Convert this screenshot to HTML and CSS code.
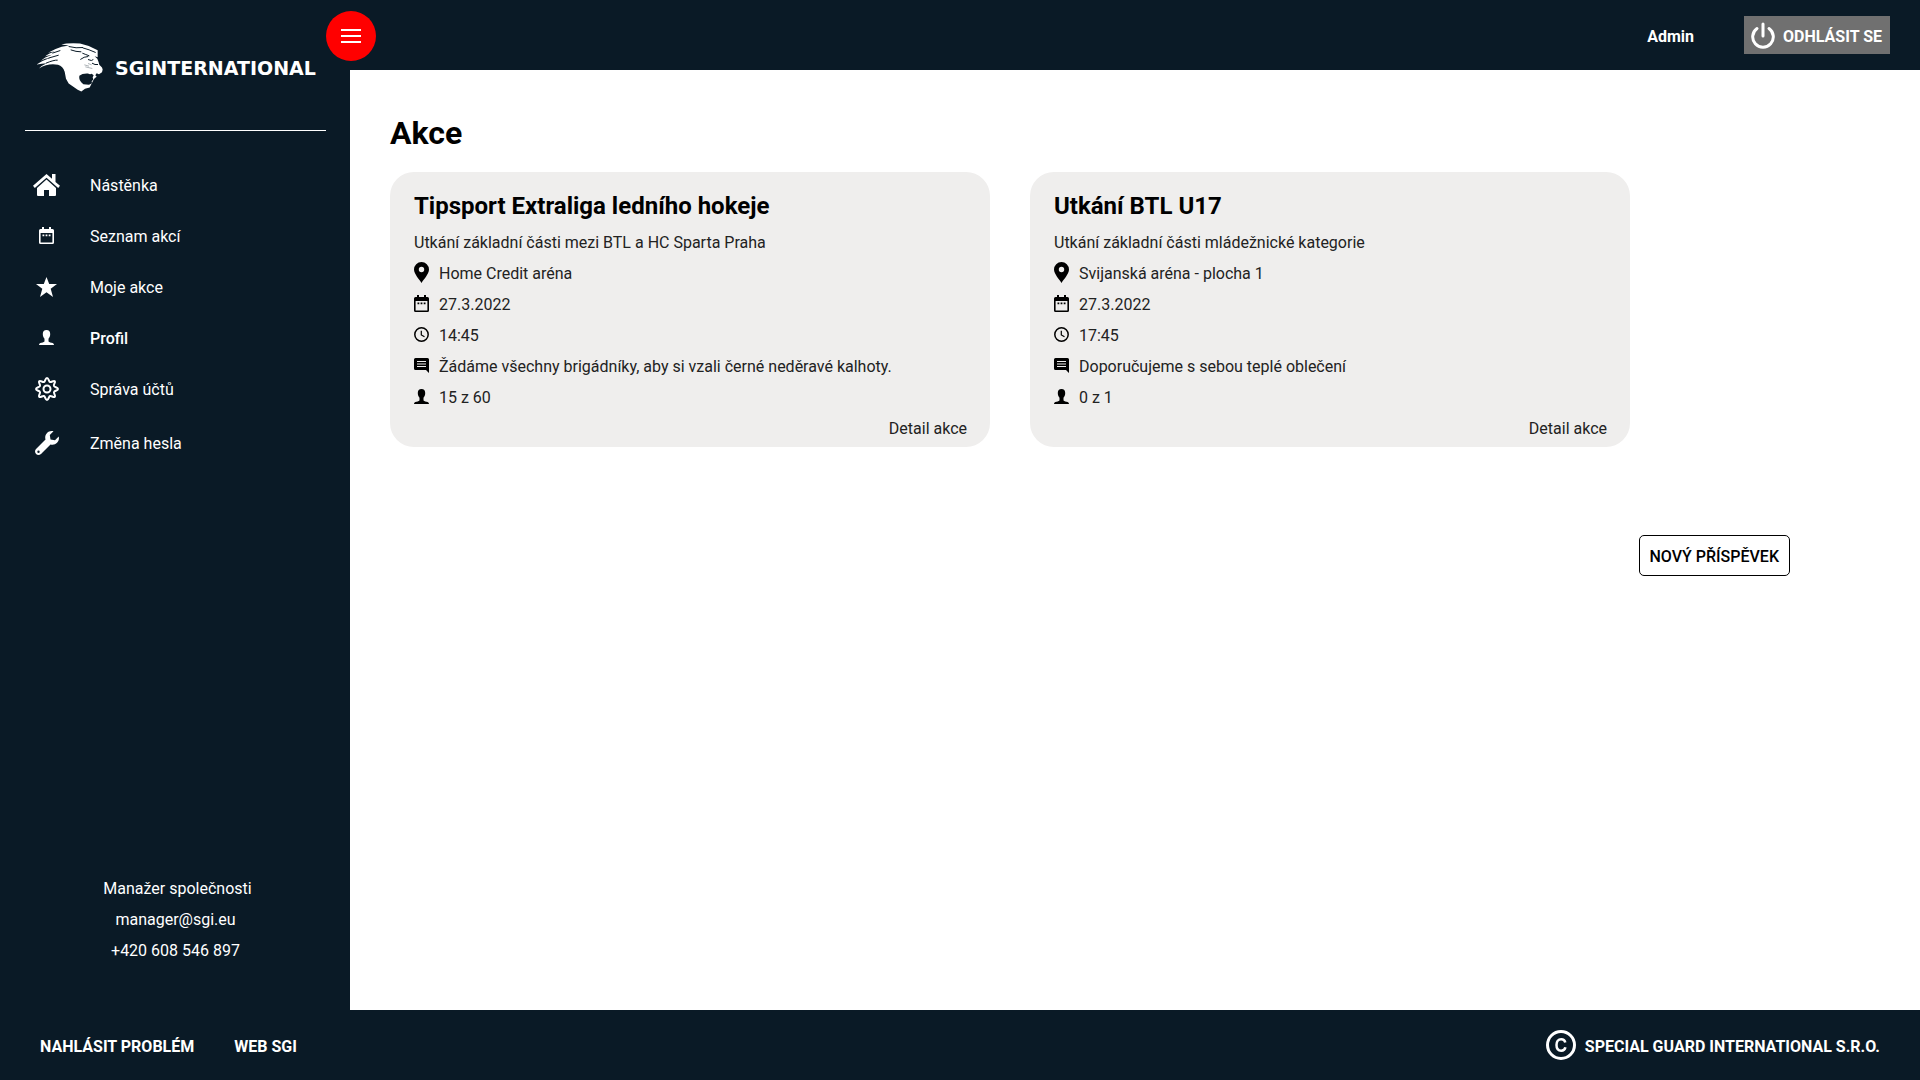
FILE: index.html
```html
<!DOCTYPE html>
<html lang="cs">
<head>
<meta charset="utf-8">
<meta name="viewport" content="width=device-width, initial-scale=1">
<title>SG International – Akce</title>
<link rel="stylesheet" href="styles.css">
</head>
<body>
<svg class="sprite" aria-hidden="true">
  <symbol id="calendar" viewBox="0 0 15 17"><path fill-rule="evenodd" d="M3 0h2v2h5V0h2v2h1.500q1.500 0 1.500 1.500v12q0 1.500-1.500 1.500h-12Q0 17 0 15.500v-12Q0 2 1.500 2H3zM1.600 6v9.400h11.800V6zM3.500 7.500h1.800v1.800H3.500zm3.100 0h1.800v1.800H6.600zm3.100 0h1.800v1.800H9.700z"/></symbol>
  <symbol id="person" viewBox="0 0 15 15"><path d="M7.500 0c2.500 0 3.700 1.500 3.700 4 0 2-.7 3.600-1.700 4.700v2.200c0 1 1.200 1.400 3 1.800 1.700.4 2.500.9 2.500 2.300H0c0-1.400.8-1.900 2.500-2.300 1.800-.4 3-.8 3-1.800V8.700C4.500 7.600 3.800 6 3.800 4c0-2.500 1.200-4 3.700-4z"/></symbol>
  <symbol id="pin" viewBox="0 0 15 21"><path fill-rule="evenodd" d="M7.500 0A7.500 7.500 0 0 1 15 7.500C15 12 9.500 17.500 7.500 21 5.500 17.500 0 12 0 7.500A7.500 7.500 0 0 1 7.500 0zm0 4.800a2.700 2.700 0 1 0 0 5.400 2.700 2.700 0 0 0 0-5.400z"/></symbol>
  <symbol id="clock" viewBox="0 0 15 15"><g fill="none" stroke="currentColor"><circle cx="7.500" cy="7.500" r="6.700" stroke-width="1.500"/><path d="M7.300 3.700v4.200l3.200 1.900" stroke-width="1.200"/></g></symbol>
  <symbol id="comment" viewBox="0 0 15 15"><path d="M1.500 0h12Q15 0 15 1.500V15l-3-3H1.500Q0 12 0 10.500v-9Q0 0 1.500 0z"/><path class="comment-lines" d="M3 3.500h9M3 6h9M3 8.500h9"/></symbol>
</svg>
<div class="page">
  <aside class="sidebar">
    <a class="brand" href="#">
      <svg class="brand-lion" viewBox="21 23 198 146" aria-hidden="true">
        <path fill="currentColor" d="M94 27Q112 22 150 24Q176 29 203 44L203 65L194 62L202 70L206 80L208 88L216 96L218 102L216 110L207 116L200 113L196 119L200 124L194 128L190 134L179 156L165 160L154 168L143 163L116 144L108 130L104 109Q99 93 84 88Q55 82 27 99Q34 90 50 83Q35 84 20 87Q33 78 61 67Q43 69 33 76Q42 66 66 58Q49 60 43 65Q53 55 74 48Q62 49 54 52Q75 40 95 34L117 30Q104 28 94 27Z"/>
        <g class="lion-cuts">
          <path class="lion-mouth" d="M148 121Q157 113 174 114Q180 118 185 115L191 119L188 125L190 132L185 137L186 143L177 148L160 146Q145 136 148 121Z"/>
          <path d="M116 33Q139 39 159 36M122 43Q138 49 154 49M158 37Q177 42 197 51M55 68L86 59M48 83Q72 73 83 74M67 53L91 45M157 53Q167 57 178 61M151 72Q162 63 175 63M174 72L184 75L190 72M186 83Q195 89 204 87"/>
          <path class="lion-whiskers" d="M163 88L177 92M166 94L187 99M174 84L185 88"/>
        </g>
      </svg>
      <span class="brand-name">SGINTERNATIONAL</span>
    </a>
    <nav class="menu" aria-label="Hlavní menu">
      <a class="menu-item" href="#"><span class="menu-icon"><svg width="27" height="22" viewBox="0 0 27 22"><path fill="currentColor" d="M13.500 0 19 4.800V0h3.500v8L27 11.800l-1.800 2.200L13.500 3.700 1.800 14 0 11.800zM13.500 5.500 23 14v7q0 1-1 1h-6v-6h-5v6H5q-1 0-1-1v-7z"/></svg></span>Nástěnka</a>
      <a class="menu-item" href="#"><span class="menu-icon"><svg width="15" height="17"><use href="#calendar"/></svg></span>Seznam akcí</a>
      <a class="menu-item" href="#"><span class="menu-icon"><svg width="21" height="20" viewBox="0 0 21 20"><path d="M10.500 0 13.200 7H21l-6.300 4.800L17 20l-6.500-4.800L4 20l2.300-8.200L0 7h7.800z"/></svg></span>Moje akce</a>
      <a class="menu-item active" href="#"><span class="menu-icon"><svg width="15" height="15"><use href="#person"/></svg></span>Profil</a>
      <a class="menu-item" href="#"><span class="menu-icon"><svg width="24" height="24" viewBox="0 0 24 24" fill="none" stroke="currentColor" stroke-width="2" stroke-linejoin="round"><circle cx="12" cy="12" r="3.500"/><path d="M12 1c1.700 0 1.700 3.500 3 4 1.300.6 3.600-2 4.800-.8S17.900 7.700 19 9c.5 1.300 4 1.300 4 3s-3.500 1.700-4 3c-.6 1.300 2 3.600.8 4.800S16.300 18.400 15 19c-1.300.5-1.300 4-3 4s-1.700-3.500-3-4c-1.300-.6-3.600 2-4.800.8S5.600 16.300 5 15c-.5-1.300-4-1.300-4-3s3.500-1.700 4-3c.6-1.300-2-3.600-.8-4.800S7.700 5.600 9 5c1.300-.5 1.300-4 3-4z"/></svg></span>Správa účtů</a>
      <a class="menu-item tall" href="#"><span class="menu-icon"><svg width="24" height="24" viewBox="0 0 24 24"><path fill-rule="evenodd" d="M18.500.3c-5-1.500-9.500 3.200-8 8.200L1 18c-3 3.500 1.500 8 5 5l9.500-9.500c5 1.500 9.600-3 8.200-8L20 9.200l-4.500-.7-.7-4.500zM3.500 19.600a1.200 1.200 0 1 1 0 2.400 1.200 1.200 0 0 1 0-2.400z"/></svg></span>Změna hesla</a>
    </nav>
    <address class="contact">
      <span>&nbsp;Manažer společnosti</span>
      <a href="mailto:manager@sgi.eu">manager@sgi.eu</a>
      <a href="tel:+420608546897">+420 608 546 897</a>
    </address>
    <button class="menu-toggle" type="button" aria-label="Menu"><svg width="20" height="14" viewBox="0 0 20 14"><path d="M0 0h20v2H0zM0 6h20v2H0zM0 12h20v2H0z"/></svg></button>
  </aside>
  <header class="topbar">
    <a class="user" href="#">Admin</a>
    <button class="logout" type="button"><svg width="24" height="27" viewBox="0 0 24 27" fill="none" stroke="currentColor" stroke-width="3" stroke-linecap="round"><path d="M12 2v12M6 6.500a10.300 10.300 0 1 0 12 0"/></svg>ODHLÁSIT SE</button>
  </header>
  <main class="content">
    <h1>Akce</h1>
    <div class="cards">
      <article class="card">
        <h2>Tipsport Extraliga ledního hokeje</h2>
        <p>Utkání základní části mezi BTL a HC Sparta Praha</p>
        <ul>
          <li><svg width="15" height="21"><use href="#pin"/></svg>Home Credit aréna</li>
          <li><svg width="15" height="17"><use href="#calendar"/></svg>27.3.2022</li>
          <li><svg width="15" height="15"><use href="#clock"/></svg>14:45</li>
          <li><svg width="15" height="15"><use href="#comment"/></svg>Žádáme všechny brigádníky, aby si vzali černé neděravé kalhoty.</li>
          <li><svg width="15" height="15"><use href="#person"/></svg>15 z 60</li>
        </ul>
        <a class="detail" href="#">Detail akce</a>
      </article>
      <article class="card">
        <h2>Utkání BTL U17</h2>
        <p>Utkání základní části mládežnické kategorie</p>
        <ul>
          <li><svg width="15" height="21"><use href="#pin"/></svg>Svijanská aréna - plocha 1</li>
          <li><svg width="15" height="17"><use href="#calendar"/></svg>27.3.2022</li>
          <li><svg width="15" height="15"><use href="#clock"/></svg>17:45</li>
          <li><svg width="15" height="15"><use href="#comment"/></svg>Doporučujeme s sebou teplé oblečení</li>
          <li><svg width="15" height="15"><use href="#person"/></svg>0 z 1</li>
        </ul>
        <a class="detail" href="#">Detail akce</a>
      </article>
    </div>
    <button class="new-post" type="button">NOVÝ PŘÍSPĚVEK</button>
  </main>
  <footer class="footer">
    <a href="#">NAHLÁSIT PROBLÉM</a>
    <a href="#">WEB SGI</a>
    <span class="copyright"><svg width="30" height="30" viewBox="0 0 30 30" fill="none" stroke="currentColor"><circle cx="15" cy="15" r="13.500" stroke-width="3"/><path d="M19.300 12.500c-.5-2-2-3.200-4.100-3.200-3 0-4.700 2.200-4.700 5.700s1.700 5.700 4.700 5.700c2.200 0 3.800-1.200 4.200-3.400" stroke-width="2.500"/></svg>SPECIAL GUARD INTERNATIONAL S.R.O.</span>
  </footer>
</div>
</body>
</html>
```
FILE: styles.css
```css
:root {
  --navy: #0a1a26;
  --card: #efeeed;
}

* { box-sizing: border-box; }

body {
  margin: 0;
  background: #fff;
  color: #000;
  font: 16px/31px Roboto, "Noto Sans", sans-serif;
}

a { color: inherit; text-decoration: none; }

button { font: inherit; cursor: pointer; }

svg { flex: none; fill: currentColor; }
svg[fill="none"] { fill: none; }

.sprite { position: absolute; width: 0; height: 0; }

.page {
  display: grid;
  grid-template-columns: 350px 1fr;
  grid-template-rows: 70px 1fr 70px;
  min-height: 100vh;
}

/* Sidebar */
.sidebar {
  position: relative;
  grid-row: 1 / 3;
  display: flex;
  flex-direction: column;
  padding: 0 24px 44px 25px;
  background: var(--navy);
  color: #fff;
}

.brand {
  display: flex;
  align-items: center;
  gap: 12px;
  height: 131px;
  padding: 4px 0 0 12px;
  border-bottom: 1px solid #fff;
}

.brand-lion { width: 66px; height: 49px; }
.lion-cuts { fill: none; stroke: var(--navy); stroke-width: 3; }
.lion-mouth { fill: var(--navy); stroke: none; }
.lion-whiskers { stroke-width: 1; }

.brand-name {
  padding-top: 2px;
  font: bold 19px/24px "DejaVu Sans", sans-serif;
}

.menu { display: flex; flex-direction: column; padding-top: 29px; }

.menu-item {
  display: flex;
  align-items: center;
  gap: 22px;
  height: 51px;
}

.menu-item.tall { height: 57px; }
.menu-item.active { font-weight: 500; }

.menu-icon {
  display: flex;
  justify-content: center;
  width: 43px;
  padding-bottom: 2px;
}

.contact {
  display: flex;
  flex-direction: column;
  align-items: center;
  margin-top: auto;
  font-style: normal;
}

.menu-toggle {
  position: absolute;
  top: 11px;
  right: -26px;
  display: grid;
  place-items: center;
  width: 50px;
  height: 50px;
  padding: 0;
  border: 0;
  border-radius: 50%;
  background: #f00;
  color: #fff;
}

/* Top bar */
.topbar {
  display: flex;
  align-items: center;
  justify-content: flex-end;
  gap: 50px;
  padding: 0 30px;
  background: var(--navy);
  color: #fff;
  line-height: 32px;
  font-weight: 700;
}

.user { padding-top: 3px; }

.logout {
  display: flex;
  align-items: center;
  gap: 8px;
  height: 38px;
  padding: 3px 8px 0 7px;
  border: 0;
  background: #707070;
  color: #fff;
}

.logout svg { margin-bottom: 3px; }

/* Content */
.content {
  display: flex;
  flex-direction: column;
  padding: 40px;
}

h1 {
  margin: 0 0 16px;
  font-size: 32px;
  line-height: 46px;
  font-weight: 700;
}

.cards { display: flex; flex-wrap: wrap; gap: 40px; }

.card {
  display: flex;
  flex-direction: column;
  width: 600px;
  padding: 16px 23px 3px 24px;
  border-radius: 24px;
  background: var(--card);
}

.card h2 {
  margin: 0 0 2px;
  font-size: 24px;
  line-height: 37px;
  font-weight: 700;
}

.card p,
.card li,
.detail { color: #222; }

.card p { margin: 0; }

.card ul { margin: 0; padding: 0; list-style: none; }

.card li { display: flex; align-items: center; gap: 10px; }
.card li svg { margin-bottom: 2px; color: #000; }

.comment-lines { fill: none; stroke: var(--card); stroke-width: 1; }

.detail { align-self: flex-end; }

.new-post {
  align-self: flex-end;
  height: 41px;
  margin: 88px 90px 0 0;
  padding: 1px 10px 0 9px;
  border: 1px solid #000;
  border-radius: 5px;
  background: #fff;
  color: #000;
  font-weight: 500;
}

/* Footer */
.footer {
  grid-column: 1 / 3;
  display: flex;
  align-items: center;
  gap: 40px;
  padding: 2px 40px 0;
  background: var(--navy);
  color: #fff;
  font-weight: 700;
}

.copyright {
  display: flex;
  align-items: center;
  gap: 9px;
  margin-left: auto;
}

.copyright svg { margin-bottom: 2px; }
```
